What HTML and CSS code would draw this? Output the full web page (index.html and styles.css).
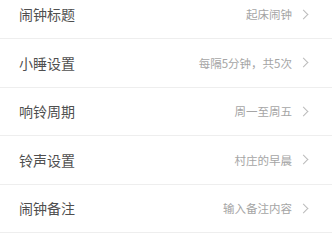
FILE: index.html
```html
<!DOCTYPE html>
<html lang="zh-CN">
<head>
<meta charset="utf-8">
<link rel="stylesheet" href="styles.css">
</head>
<body>
<div class="list">
  <div class="row"><span class="label">闹钟标题</span><span class="value">起床闹钟</span><span class="chev"></span></div>
  <div class="row"><span class="label">小睡设置</span><span class="value">每隔5分钟，共5次</span><span class="chev"></span></div>
  <div class="row"><span class="label">响铃周期</span><span class="value">周一至周五</span><span class="chev"></span></div>
  <div class="row"><span class="label">铃声设置</span><span class="value">村庄的早晨</span><span class="chev"></span></div>
  <div class="row"><span class="label">闹钟备注</span><span class="value">输入备注内容</span><span class="chev"></span></div>
</div>
</body>
</html>
```
FILE: styles.css
```css
html, body {
  margin: 0;
  padding: 0;
  background: #fff;
  overflow: hidden;
}
body {
  font-family: "Noto Sans CJK SC", "Noto Sans", sans-serif;
}
.list {
  margin-top: -9.5px;
}
.row {
  display: flex;
  align-items: center;
  height: 47.5px;
  border-bottom: 1px solid #eeeeee;
  padding: 0 23px 0 19px;
}
.label {
  flex: 1;
  font-size: 14px;
  color: #4f4f4f;
}
.value {
  font-size: 11.5px;
  color: #a5a5a5;
  margin-right: 8px;
}
.chev {
  width: 6px;
  height: 6px;
  border-top: 1px solid #bbb;
  border-right: 1px solid #bbb;
  transform: rotate(45deg);
  margin-right: 2px;
}
```
